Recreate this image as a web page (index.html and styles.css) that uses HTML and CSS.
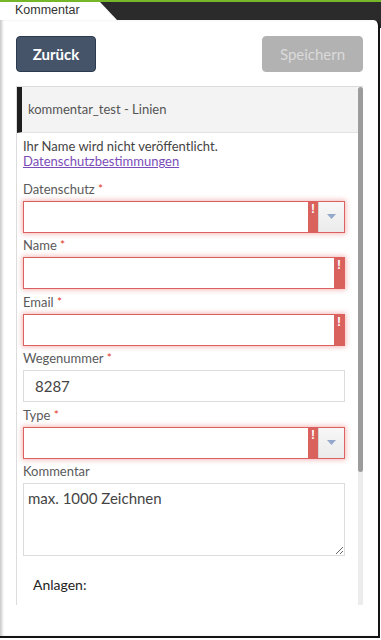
FILE: index.html
```html
<!DOCTYPE html>
<html lang="de">
<head>
<meta charset="utf-8">
<title>Kommentar</title>
<link rel="stylesheet" href="styles.css">
</head>
<body>
<div class="topbar"><div class="tab">Kommentar</div></div>
<div class="panel">
  <div class="actions">
    <button class="btn btn-back">Zurück</button>
    <button class="btn btn-save" disabled>Speichern</button>
  </div>
  <div class="form-wrap">
    <div class="form-scroll">
      <div class="form-head">kommentar_test - Linien</div>
      <div class="form-body">
        <p class="note">Ihr Name wird nicht veröffentlicht.<br><a href="#">Datenschutzbestimmungen</a></p>

        <div class="field">
          <label>Datenschutz <span class="req">*</span></label>
          <div class="box invalid"><span class="val"></span><span class="err">!</span><span class="drop"><svg width="9" height="5" viewBox="0 0 9 5"><path d="M0 0h9L4.5 5z" fill="#94a8cc"/></svg></span></div>
        </div>

        <div class="field">
          <label>Name <span class="req">*</span></label>
          <div class="box invalid"><span class="val"></span><span class="err">!</span></div>
        </div>

        <div class="field">
          <label>Email <span class="req">*</span></label>
          <div class="box invalid"><span class="val"></span><span class="err">!</span></div>
        </div>

        <div class="field">
          <label>Wegenummer <span class="req">*</span></label>
          <div class="box"><span class="val num">8287</span></div>
        </div>

        <div class="field">
          <label>Type <span class="req">*</span></label>
          <div class="box invalid"><span class="val"></span><span class="err">!</span><span class="drop"><svg width="9" height="5" viewBox="0 0 9 5"><path d="M0 0h9L4.5 5z" fill="#94a8cc"/></svg></span></div>
        </div>

        <div class="field">
          <label>Kommentar</label>
          <textarea class="area" placeholder="max. 1000 Zeichnen"></textarea>
        </div>

        <div class="attach">Anlagen:</div>
      </div>
    </div>
    <div class="scrollbar"><div class="thumb"></div></div>
  </div>
</div>
</body>
</html>
```

FILE: styles.css
```css
* { box-sizing: border-box; }

html, body {
  margin: 0;
  padding: 0;
}

body {
  width: 381px;
  height: 640px;
  overflow: hidden;
  background: linear-gradient(#2b2b2b 0, #2b2b2b 28px, #fff 28px);
  font-family: Lato, "Open Sans", sans-serif;
}

.topbar {
  height: 20px;
  background: #2b2b2b;
  border-top: 2px solid #76b72a;
}

.tab {
  width: 118px;
  height: 18px;
  background: #fff;
  clip-path: polygon(0 0, 100px 0, 117px 100%, 0 100%);
  font-family: "Liberation Sans", Arial, sans-serif;
  font-size: 12.5px;
  color: #333;
  line-height: 17px;
  padding-left: 15px;
}

.panel {
  width: 380px;
  height: 618px;
  background: #fff;
  border-right: 2px solid #141414;
  border-bottom: 2px solid #141414;
  border-top-right-radius: 6px;
  box-shadow: inset 3px 0 3px -1px rgba(0,0,0,.22);
  padding: 16px 15px 0 16px;
}

.actions {
  display: flex;
  justify-content: space-between;
  height: 36px;
}

.btn {
  height: 36px;
  border-radius: 4px;
  font-family: Lato, sans-serif;
  font-size: 15px;
  font-weight: 700;
  padding: 0;
}

.btn-back {
  width: 80px;
  background: #46546a;
  border: 1px solid #2b3a4e;
  color: #fff;
}

.btn-save {
  width: 101px;
  background: #b2b2b2;
  border: 1px solid #b2b2b2;
  color: #dadada;
  font-weight: 400;
}

.form-wrap {
  margin-top: 14px;
  height: 519px;
  border-top: 1px solid #dcdcdc;
  border-left: 1px solid #dcdcdc;
  display: flex;
}

.form-scroll {
  flex: 1;
  min-width: 0;
  overflow: hidden;
}

.scrollbar {
  width: 5px;
  background: #ececec;
  border-radius: 3px 3px 0 0;
}

.thumb {
  height: 385px;
  background: #9c9c9c;
  border-radius: 3px;
}

.form-head {
  height: 46px;
  background: #f3f3f3;
  border-left: 5px solid #1e1e1e;
  border-bottom: 1px solid #e2e2e2;
  font-size: 13px;
  color: #555;
  line-height: 45px;
  padding-left: 6px;
}

.form-body {
  padding: 6px 13px 0 6px;
}

.note {
  margin: 0 0 11.5px;
  font-size: 13px;
  line-height: 15px;
  color: #444;
}

.note a {
  color: #7a4cb8;
  text-decoration: underline;
}

.field {
  margin-bottom: 4.5px;
}

.field label {
  display: block;
  height: 17px;
  font-size: 13px;
  line-height: 17px;
  color: #5a5a5a;
  margin-bottom: 3px;
}

.req {
  color: #e2392a;
  font-size: 12px;
  line-height: 0;
  vertical-align: 1px;
}

.box {
  display: flex;
  height: 32px;
  border: 1px solid #dcdcdc;
  background: #fff;
}

.box.invalid {
  border-color: #dc6060;
  box-shadow: 0 0 5px 1px rgba(228, 85, 85, .42);
}

.val {
  flex: 1;
}

.num {
  font-size: 15px;
  color: #444;
  line-height: 30px;
  padding-left: 11px;
}

.err {
  width: 10px;
  background: #d9625c;
  color: #fff;
  font-family: "Liberation Sans", Arial, sans-serif;
  font-weight: 700;
  font-size: 12px;
  line-height: 13px;
  text-align: center;
  padding-top: 1px;
}

.drop {
  width: 26px;
  background: linear-gradient(#f7f7f7, #ebebeb);
  border-left: 1px solid #d6d6d6;
  display: flex;
  align-items: center;
  justify-content: center;
}

.area {
  display: block;
  width: 100%;
  height: 73px;
  border: 1px solid #dcdcdc;
  font-family: Lato, sans-serif;
  font-size: 15px;
  color: #444;
  padding: 5px 4px;
  margin: 0;
}

.area::placeholder {
  color: #444;
  opacity: 1;
}

.attach {
  margin-top: 20px;
  padding-left: 10px;
  font-size: 14px;
  line-height: 18px;
  color: #222;
}
```
